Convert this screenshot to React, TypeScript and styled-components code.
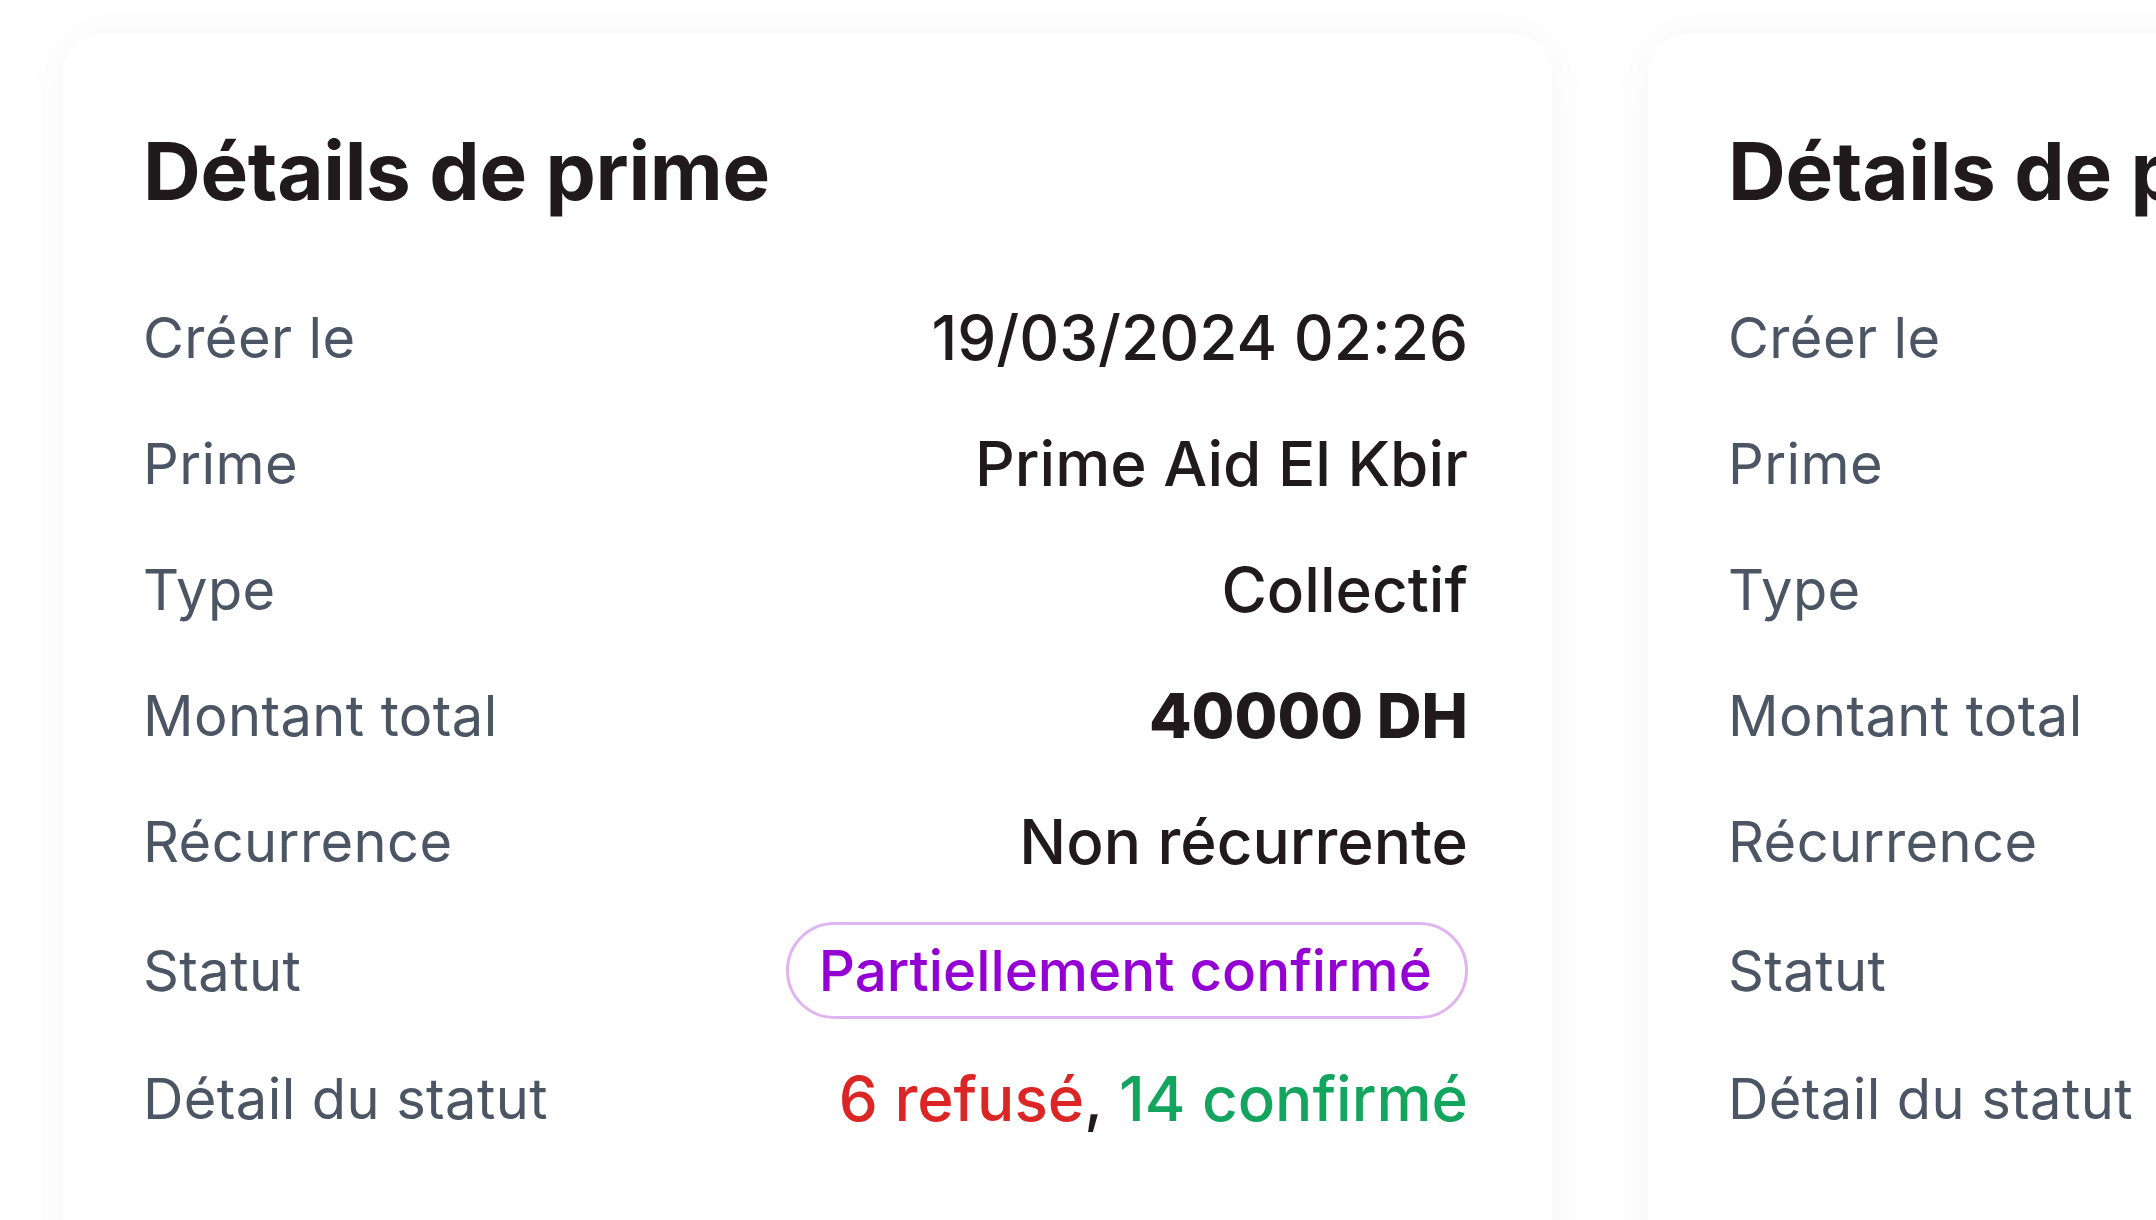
import React from "react";
import styled, { createGlobalStyle } from "styled-components";

const GlobalStyle = createGlobalStyle`
  html, body {
    margin: 0;
    padding: 0;
    background: #ffffff;
    overflow: hidden;
  }
  body {
    font-family: Inter, "Noto Sans", "Liberation Sans", sans-serif;
    -webkit-font-smoothing: antialiased;
  }
`;

const Page = styled.div`
  display: flex;
  gap: 96px;
  padding: 34px 0 0 63px;
  width: max-content;
`;

const Card = styled.section`
  flex: 0 0 1489px;
  box-sizing: border-box;
  height: 1260px;
  background: #ffffff;
  border-radius: 40px;
  box-shadow: 0 0 48px rgba(0, 0, 0, 0.045);
  padding: 89px 84px 0 80px;
`;

const Title = styled.h2`
  margin: 0 0 73px;
  font-size: 80px;
  line-height: 96px;
  font-weight: 700;
  color: #211a1d;
  letter-spacing: -0.3px;
`;

const List = styled.dl`
  margin: 0;
  display: flex;
  flex-direction: column;
  gap: 34px;
`;

const Row = styled.div`
  display: flex;
  align-items: center;
  justify-content: space-between;
  min-height: 92px;
`;

const Label = styled.dt`
  font-size: 56px;
  line-height: 92px;
  font-weight: 400;
  color: #4b5563;
  letter-spacing: 0.4px;
`;

const Value = styled.dd<{ $bold?: boolean }>`
  margin: 0;
  font-size: 62px;
  line-height: 92px;
  font-weight: ${(p) => (p.$bold ? 800 : 500)};
  color: #211a1d;
  text-align: right;
`;

const Pill = styled.span`
  display: inline-flex;
  align-items: center;
  box-sizing: border-box;
  height: 97px;
  padding: 0 33px 0 30px;
  border: 3px solid #dfb5f1;
  border-radius: 999px;
  font-size: 56.5px;
  font-weight: 500;
  color: #9400d3;
`;

const Count = styled.span<{ $tone: "red" | "green" }>`
  color: ${(p) => (p.$tone === "red" ? "#dc2626" : "#13a55e")};
`;

type Item = { label: string; value: React.ReactNode; bold?: boolean };

const items: Item[] = [
  { label: "Créer le", value: "19/03/2024 02:26" },
  { label: "Prime", value: "Prime Aid El Kbir" },
  { label: "Type", value: "Collectif" },
  { label: "Montant total", value: "40000 DH", bold: true },
  { label: "Récurrence", value: "Non récurrente" },
  { label: "Statut", value: <Pill>Partiellement confirmé</Pill> },
  {
    label: "Détail du statut",
    value: (
      <>
        <Count $tone="red">6 refusé</Count>, <Count $tone="green">14 confirmé</Count>
      </>
    ),
  },
];

const DetailsCard = () => (
  <Card>
    <Title>Détails de prime</Title>
    <List>
      {items.map((it) => (
        <Row key={it.label}>
          <Label>{it.label}</Label>
          <Value $bold={it.bold}>{it.value}</Value>
        </Row>
      ))}
    </List>
  </Card>
);

export default function App() {
  return (
    <>
      <GlobalStyle />
      <Page>
        <DetailsCard />
        <DetailsCard />
      </Page>
    </>
  );
}
